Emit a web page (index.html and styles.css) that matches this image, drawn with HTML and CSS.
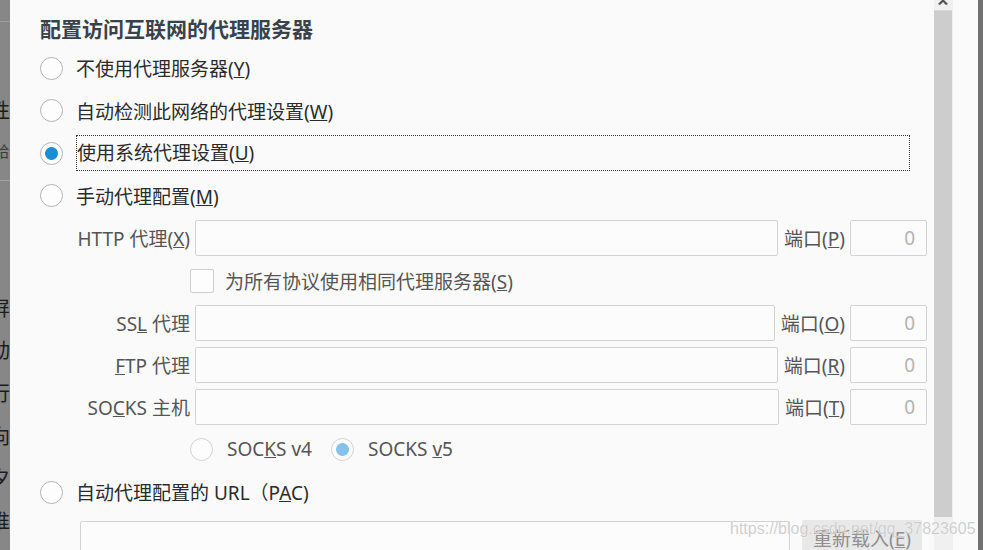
FILE: index.html
```html
<!DOCTYPE html>
<html lang="zh-CN">
<head>
    <meta charset="UTF-8">
    <title>连接设置</title>
    <link rel="stylesheet" href="styles.css">
</head>
<body>
    <div class="screen">
        <div class="behind">
            <div class="behind-top"></div>
            <span class="ch">性</span>
            <span class="ch small">給</span>
            <div class="behind-line"></div>
            <span class="ch">屏</span>
            <span class="ch">动</span>
            <span class="ch">行</span>
            <span class="ch">向</span>
            <span class="ch">夕</span>
            <span class="ch">推</span>
        </div>

        <div class="dialog">
            <div class="content">
                <h1 class="title">配置访问互联网的代理服务器</h1>

                <label class="choice"><input type="radio" name="proxy"><span class="text">不使用代理服务器(<u>Y</u>)</span></label>
                <label class="choice"><input type="radio" name="proxy"><span class="text">自动检测此网络的代理设置(<u>W</u>)</span></label>
                <label class="choice"><input type="radio" name="proxy" checked><span class="text focused">使用系统代理设置(<u>U</u>)</span></label>
                <label class="choice"><input type="radio" name="proxy"><span class="text">手动代理配置(<u>M</u>)</span></label>

                <div class="manual">
                    <div class="field-row">
                        <label class="field-label">HTTP 代理(<u>X</u>)</label>
                        <input class="host" type="text" disabled>
                        <label class="port-label">端口(<u>P</u>)</label>
                        <input class="port" type="text" value="0" disabled>
                    </div>
                    <label class="same-row"><input type="checkbox" disabled><span>为所有协议使用相同代理服务器(<u>S</u>)</span></label>
                    <div class="field-row">
                        <label class="field-label">SS<u>L</u> 代理</label>
                        <input class="host" type="text" disabled>
                        <label class="port-label">端口(<u>O</u>)</label>
                        <input class="port" type="text" value="0" disabled>
                    </div>
                    <div class="field-row spaced">
                        <label class="field-label"><u>F</u>TP 代理</label>
                        <input class="host" type="text" disabled>
                        <label class="port-label">端口(<u>R</u>)</label>
                        <input class="port" type="text" value="0" disabled>
                    </div>
                    <div class="field-row spaced">
                        <label class="field-label">SO<u>C</u>KS 主机</label>
                        <input class="host" type="text" disabled>
                        <label class="port-label">端口(<u>T</u>)</label>
                        <input class="port" type="text" value="0" disabled>
                    </div>
                    <div class="socks-row">
                        <label class="socks"><input type="radio" name="socks" disabled><span>SOC<u>K</u>S v4</span></label>
                        <label class="socks"><input type="radio" name="socks" checked disabled><span>SOCKS <u>v</u>5</span></label>
                    </div>
                </div>

                <label class="choice"><input type="radio" name="proxy"><span class="text">自动代理配置的 URL（P<u>A</u>C)</span></label>

                <div class="pac-row">
                    <input class="pac" type="text" disabled>
                    <button class="reload" disabled>重新载入(<u>E</u>)</button>
                </div>
            </div>

            <div class="scrollbar">
                <svg class="arrow" width="14" height="6" viewBox="0 0 14 6"><polygon points="2,5 7,0 12,5 10,6 7,3 4,6" fill="#505050"/></svg>
                <div class="thumb"></div>
            </div>
        </div>

        <div class="gutter"></div>
        <div class="edge"></div>

        <div class="watermark">https://blog.csdn.net/qq_37823605</div>
    </div>
</body>
</html>
```

FILE: styles.css
```css
*{
    margin: 0;
    padding: 0;
    box-sizing: border-box;
}
body{
    width: 983px;
    height: 550px;
    overflow: hidden;
    background: #fafafa;
    font-family: "Noto Sans", "Noto Sans CJK SC", sans-serif;
    color: #2b2b2b;
}
.screen{
    position: relative;
    display: flex;
    height: 550px;
}

/* page left behind the dialog */
.behind{
    width: 10px;
    background: #878787;
    display: flex;
    flex-direction: column;
    overflow: hidden;
}
.behind > *{
    flex-shrink: 0;
}
.behind-top{
    height: 22px;
    border-bottom: 1px solid #9c9c9c;
    margin-bottom: 75px;
}
.ch{
    display: block;
    height: 42.7px;
    line-height: 28px;
    margin-left: -10px;
    font-size: 20px;
    color: #1c1c1c;
}
.ch.small{
    font-size: 15px;
    color: #3a3a3a;
    height: 40px;
    line-height: 22px;
    margin-left: -6px;
}
.behind-line{
    height: 1px;
    background: #a2a2a2;
    margin-bottom: 72px;
    margin-top: 0;
}
.behind-line + .ch{
    margin-top: 42px;
}

/* dialog */
.dialog{
    width: 943px;
    display: flex;
    background: #fafafa;
}
.content{
    width: 924px;
    padding: 12px 7px 0 30px;
    display: flex;
    flex-direction: column;
}
.content > *, .manual > *{
    flex-shrink: 0;
}
.title{
    height: 35px;
    line-height: 35px;
    font-size: 21px;
    font-weight: 700;
    color: #39424c;
}
.choice{
    height: 42.5px;
    display: flex;
    align-items: center;
    font-size: 19px;
}
.choice input{
    margin-right: 13px;
}
.choice .text{
    padding-left: 0;
}
.choice .focused{
    flex: 1;
    height: 36px;
    line-height: 34px;
    margin-right: 17px;
    border: 1px dotted #333;
}

input[type=radio]{
    appearance: none;
    width: 23px;
    height: 23px;
    border: 1px solid #b3b3b5;
    border-radius: 50%;
    background: #fdfdfd;
    flex: none;
}
input[type=radio]:checked{
    background: radial-gradient(circle, #1b8dd5 0 6px, #fdfdfd 6.8px);
}
input[type=radio]:disabled{
    border-color: #d2d2d4;
}
input[type=radio]:checked:disabled{
    background: radial-gradient(circle, #83c3ea 0 6px, #fdfdfd 6.8px);
}

/* manual settings */
.manual{
    margin: 3px 0 0 30px;
    display: flex;
    flex-direction: column;
    font-size: 19px;
    color: #555;
}
.field-row{
    display: flex;
    align-items: center;
    height: 36px;
}
.field-row.spaced{
    margin-top: 6px;
}
.field-label{
    width: 120px;
    text-align: right;
    white-space: nowrap;
}
.host,.port,.pac{
    height: 36px;
    border: 1px solid #d3d3d5;
    border-radius: 2px;
    background: #fcfcfc;
    font-family: inherit;
    font-size: 19px;
}
.host{
    flex: 1;
    min-width: 0;
    margin-left: 5px;
}
.port-label{
    margin: 0 5px 0 6px;
    white-space: nowrap;
}
.port{
    width: 77px;
    text-align: right;
    padding-right: 11px;
    color: #b3b3b3;
}
.same-row{
    height: 49px;
    display: flex;
    align-items: center;
    padding-left: 120px;
}
.same-row input{
    appearance: none;
    width: 24px;
    height: 24px;
    border: 1px solid #cfcfd1;
    border-radius: 2px;
    background: #fdfdfd;
    margin-right: 11px;
}
.socks-row{
    height: 44px;
    margin-top: 2px;
    display: flex;
    align-items: center;
    padding-left: 120px;
    gap: 19px;
}
.socks{
    display: flex;
    align-items: center;
    gap: 14px;
}

/* PAC */
.pac-row{
    display: flex;
    margin: 7px 5px 0 40px;
}
.pac{
    flex: 1;
}
.reload{
    width: 120px;
    height: 36px;
    margin-left: 12px;
    margin-top: -1px;
    border: none;
    border-radius: 2px;
    background: #e8e8e8;
    color: #8f8f8f;
    font-family: inherit;
    font-size: 19px;
}

/* scrollbar */
.scrollbar{
    width: 19px;
    display: flex;
    flex-direction: column;
    background: #f0f0f0;
}
.scrollbar > *{
    flex-shrink: 0;
}
.arrow{
    display: block;
    margin: -1px 0 0 2px;
}
.thumb{
    height: 507px;
    margin-top: 5px;
    width: 18px;
    background: #cdcdcd;
    border-top: 1px solid #dadada;
}
.gutter{
    width: 25px;
    background: #fafafa;
}
.edge{
    width: 5px;
    background: #707070;
}

.watermark{
    position: absolute;
    left: 730px;
    top: 520px;
    font-family: "Liberation Sans", sans-serif;
    font-size: 16px;
    color: rgba(190, 190, 190, 0.75);
    text-shadow: 0 0 1px #fff;
}
```
